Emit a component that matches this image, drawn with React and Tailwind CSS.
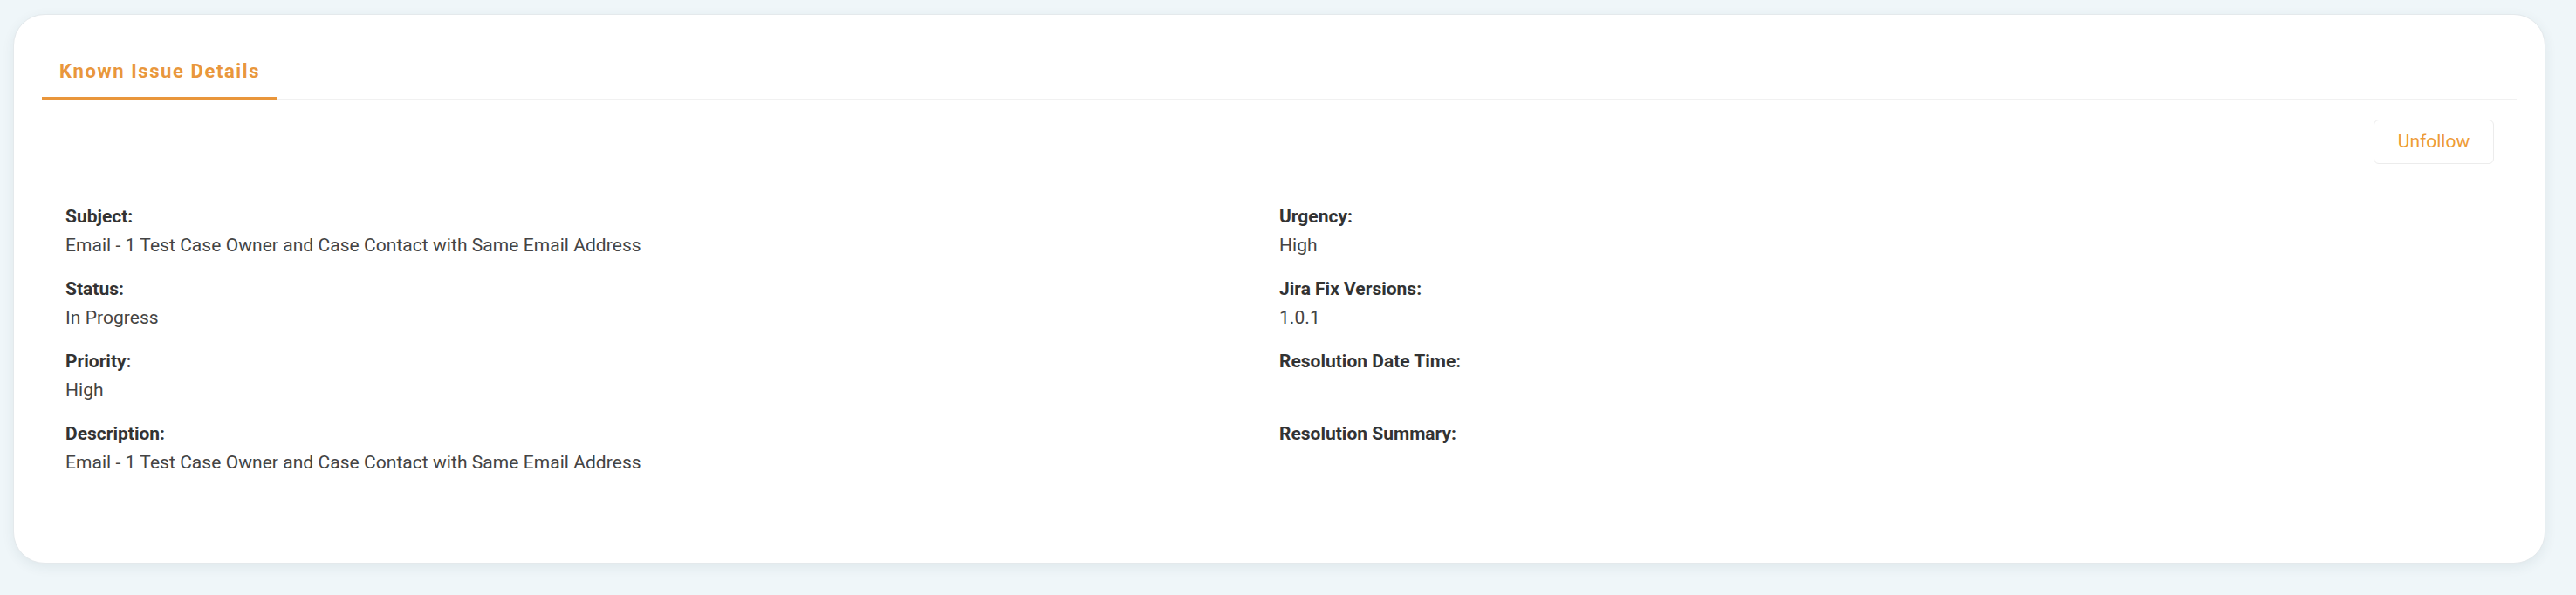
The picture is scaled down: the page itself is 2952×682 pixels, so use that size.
import { useState } from "react";

const leftFields = [
  { label: "Subject:", value: "Email - 1 Test Case Owner and Case Contact with Same Email Address" },
  { label: "Status:", value: "In Progress" },
  { label: "Priority:", value: "High" },
  { label: "Description:", value: "Email - 1 Test Case Owner and Case Contact with Same Email Address" },
];

const rightFields = [
  { label: "Urgency:", value: "High" },
  { label: "Jira Fix Versions:", value: "1.0.1" },
  { label: "Resolution Date Time:", value: "" },
  { label: "Resolution Summary:", value: "" },
];

const Field = ({ label, value }) => (
  <div className="mb-[17px]">
    <div className="font-bold text-[21px] leading-[33px] text-[#333333]">{label}</div>
    <div className="text-[21px] leading-[33px] h-[33px] tracking-[0.05px] text-[#444444]">{value}</div>
  </div>
);

const App = () => {
  const [following, setFollowing] = useState(true);

  return (
    <div
      className="min-h-screen bg-[#eff6f9] pl-[15px] pr-[35px] pt-[16px] pb-[36px]"
      style={{ fontFamily: "Roboto, 'Liberation Sans', sans-serif" }}
    >
      <div className="h-[630px] rounded-[36px] bg-white border border-[#e4e9ec] shadow-[0_4px_14px_rgba(40,60,80,0.08)] px-[32px] pt-[49px]">
        {/* tab strip */}
        <div className="flex border-b-2 border-[#f1f1f1]">
          <div className="-mb-[2px] border-b-4 border-[#e9963b] px-[20px] pb-[13px]">
            <span className="font-bold text-[22px] leading-[32px] tracking-[1.6px] text-[#e9973c]">
              Known Issue Details
            </span>
          </div>
        </div>

        <div className="flex justify-end pt-[22px] pr-[26px]">
          <button
            onClick={() => setFollowing((f) => !f)}
            className="h-[51px] w-[138px] rounded-[6px] border border-[#ececec] bg-white text-[21px] text-[#ee9c35]"
          >
            {following ? "Unfollow" : "Follow"}
          </button>
        </div>

        <div className="grid grid-cols-2 px-[27px] pt-[44px]">
          <div>
            {leftFields.map((f) => (
              <Field key={f.label} {...f} />
            ))}
          </div>
          <div>
            {rightFields.map((f) => (
              <Field key={f.label} {...f} />
            ))}
          </div>
        </div>
      </div>
    </div>
  );
};

export default App;
